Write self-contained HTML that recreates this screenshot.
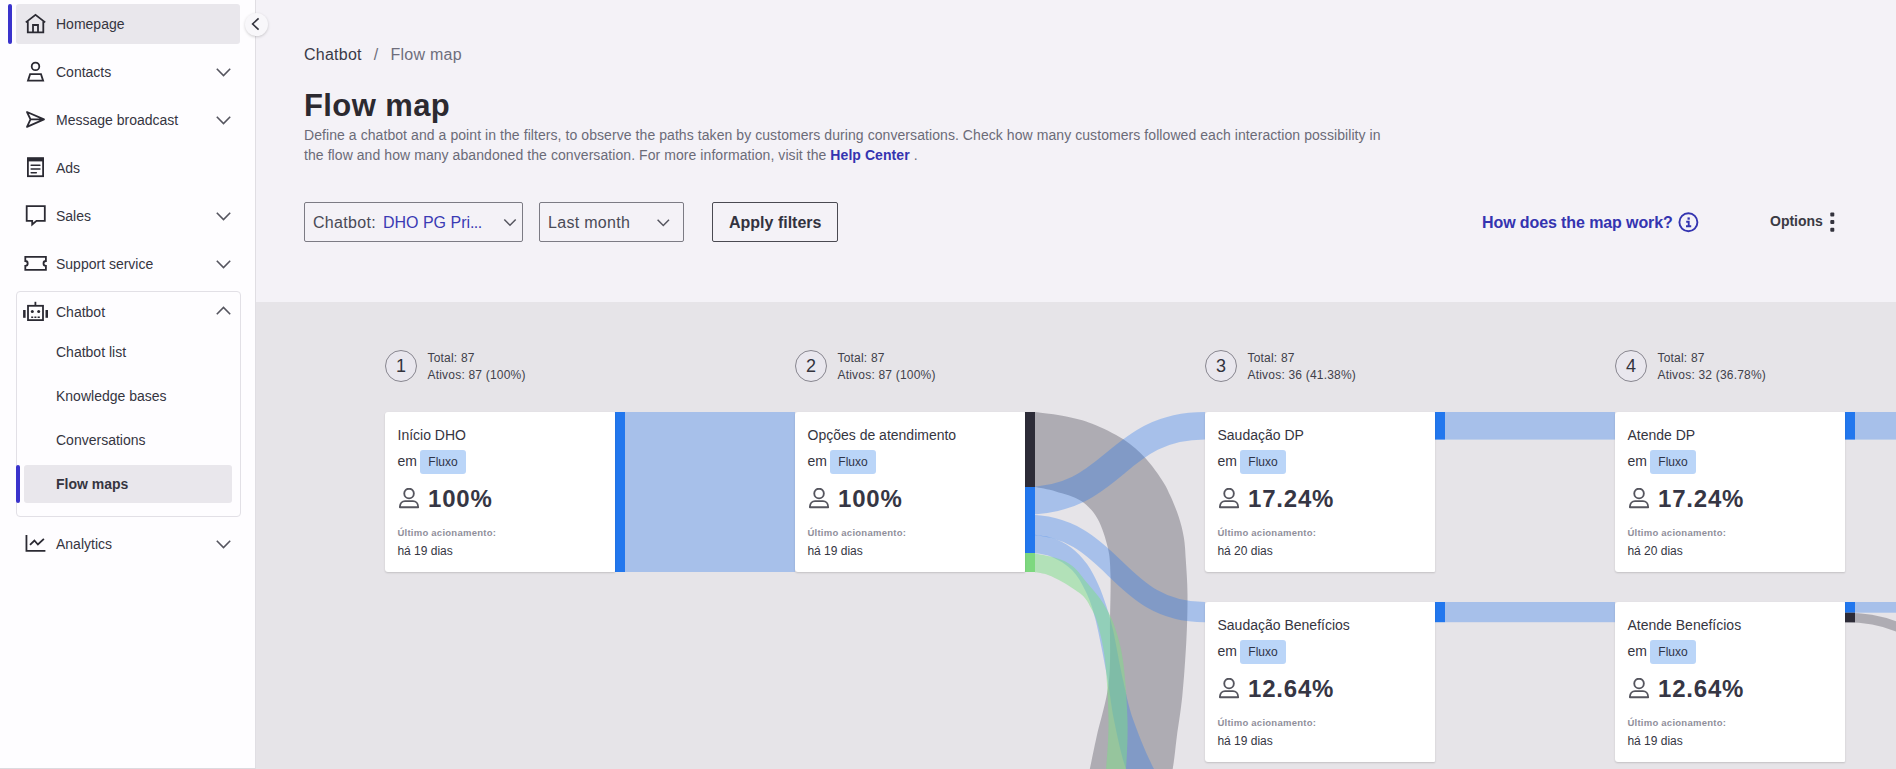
<!DOCTYPE html>
<html><head><meta charset="utf-8">
<style>
*{margin:0;padding:0;box-sizing:border-box}
html,body{width:1896px;height:769px;overflow:hidden;font-family:"Liberation Sans",sans-serif;background:#f4f2f7;color:#33333f}
.abs{position:absolute}
#side{position:absolute;left:0;top:0;width:256px;height:769px;background:#fefdff;border-right:1px solid #e0dee3;border-bottom:1px solid #dcdadf}
.item{position:absolute;left:16px;width:224px;height:40px}
.item .lbl{position:absolute;left:40px;top:0;line-height:40px;font-size:14px;color:#35353f;white-space:nowrap}
.item svg.ic{position:absolute;left:7px;top:10px}
.chev{position:absolute;right:8px;top:13px}
#main{position:absolute;left:256px;top:0;width:1640px;height:769px}
#flow{position:absolute;left:256px;top:302px;width:1640px;height:467px;background:#e6e4e8;overflow:hidden}
.card{position:absolute;width:230px;height:160px;background:#fff;border-radius:3px 1px 1px 3px;box-shadow:0 1px 2px rgba(0,0,0,0.16)}
.card .ct{position:absolute;left:12.5px;top:15px;font-size:14px;line-height:16px;color:#35353f;white-space:nowrap}
.card .em{position:absolute;left:12.5px;top:41px;font-size:14px;line-height:16px;color:#35353f}
.card .chip{position:absolute;left:35px;top:38px;width:46px;height:24px;border-radius:3px;background:#bad5f8;font-size:12px;line-height:25.5px;text-align:center;color:#2f3448}
.card .pi{position:absolute;left:14px;top:76px}
.card .pct{position:absolute;left:43px;top:74.5px;font-size:24px;line-height:24px;font-weight:bold;letter-spacing:0.8px;color:#363644;white-space:nowrap}
.card .ul{position:absolute;left:12.4px;top:115px;font-size:9.5px;line-height:12px;font-weight:bold;letter-spacing:0.25px;color:#908f9b;white-space:nowrap}
.card .when{position:absolute;left:12.4px;top:132px;font-size:12px;line-height:14px;color:#35353f;white-space:nowrap}
.stc{position:absolute;width:32px;height:32px;border-radius:50%;border:1px solid #88868f;background:#e9e7ee;font-size:18px;line-height:30px;text-align:center;color:#33333d}
.stt{position:absolute;font-size:12px;line-height:17px;letter-spacing:0.2px;color:#40404a;white-space:nowrap}
</style></head><body>
<div id="side">
  <div class="item" style="top:4px;background:#e9e7ec;border-radius:3px">
    <div class="lbl">Homepage</div>
  </div>
  <div class="abs" style="left:8px;top:4px;width:4px;height:40px;background:#3a33cc;border-radius:2px"></div>
  <div class="item" style="top:52px"><div class="lbl">Contacts</div></div>
  <div class="item" style="top:100px"><div class="lbl">Message broadcast</div></div>
  <div class="item" style="top:148px"><div class="lbl">Ads</div></div>
  <div class="item" style="top:196px"><div class="lbl">Sales</div></div>
  <div class="item" style="top:244px"><div class="lbl">Support service</div></div>
  <div class="abs" style="left:16px;top:291px;width:225px;height:226px;border:1px solid #e2e0e6;border-radius:4px"></div>
  <div class="item" style="top:292px"><div class="lbl">Chatbot</div></div>
  <div class="item" style="top:332px"><div class="lbl">Chatbot list</div></div>
  <div class="item" style="top:376px"><div class="lbl">Knowledge bases</div></div>
  <div class="item" style="top:420px"><div class="lbl">Conversations</div></div>
  <div class="abs" style="left:24px;top:465px;width:208px;height:38px;background:#e9e7ec;border-radius:3px"></div>
  <div class="abs" style="left:16px;top:465px;width:4px;height:38px;background:#3a33cc;border-radius:2px"></div>
  <div class="item" style="top:464px"><div class="lbl" style="font-weight:bold">Flow maps</div></div>
  <div class="item" style="top:524px"><div class="lbl">Analytics</div></div>
</div>
<svg class="abs" style="left:0;top:0" width="256" height="769" viewBox="0 0 256 769" fill="none" stroke="#2b2a33" stroke-width="1.8" stroke-linejoin="miter">
 <!-- house -->
 <path d="M25.8,22.4 L35.5,14.9 L45.2,22.4 M27.8,20.8 V32.3 H43.3 V20.8 M33,32.3 V25 H38 V32.3"/>
 <!-- contacts -->
 <circle cx="35.5" cy="66.4" r="3.8"/>
 <path d="M30.1,74.2 H41 L43.1,80.6 H28 Z"/>
 <!-- send -->
 <path d="M27,112 L44,119.4 L27,126.8 L30.5,119.4 Z M30.5,119.4 H44" stroke-linejoin="round"/>
 <!-- ads -->
 <rect x="27.9" y="158.4" width="15.2" height="17.8"/>
 <rect x="27.1" y="157.4" width="16.8" height="4" fill="#2b2a33" stroke="none"/>
 <path d="M31.2,165.2 H39.9 M31.2,169 H39.9 M31.2,172.8 H36.3" stroke-width="1.6" stroke-linecap="round"/>
 <!-- sales -->
 <path d="M26.7,206.1 H44.8 V220.9 H36.5 L32.2,224.5 V220.9 H26.7 Z"/>
 <!-- ticket -->
 <path d="M25.3,256.8 H45.9 V261 A2.4,2.4 0 0 0 45.9,265.8 V269.9 H25.3 V265.8 A2.4,2.4 0 0 0 25.3,261 Z"/>
 <!-- robot -->
 <rect x="28" y="305.8" width="15" height="14.3"/>
 <path d="M35.4,301.8 V305"/>
 <rect x="23.1" y="310" width="2.5" height="7.8" fill="#2b2a33" stroke="none"/>
 <rect x="45.5" y="310" width="2.5" height="7.8" fill="#2b2a33" stroke="none"/>
 <circle cx="32.3" cy="311.4" r="1.5" fill="#2b2a33" stroke="none"/>
 <circle cx="38.7" cy="311.4" r="1.5" fill="#2b2a33" stroke="none"/>
 <path d="M31.2,317.2 H33.2 M34.4,317.2 H36.4 M37.6,317.2 H39.8" stroke-width="1.5"/>
 <!-- analytics -->
 <path d="M26.45,535.1 V550.9 H45.4" />
 <path d="M30,544.9 L34.4,540.5 L37.9,544.5 L43.9,538.9" stroke-linejoin="miter"/>
 <!-- chevrons -->
 <g stroke="#55555f" stroke-width="1.6">
  <path d="M216.8,68.8 L223.5,75.5 L230.2,68.8"/>
  <path d="M216.8,116.8 L223.5,123.5 L230.2,116.8"/>
  <path d="M216.8,212.8 L223.5,219.5 L230.2,212.8"/>
  <path d="M216.8,260.8 L223.5,267.5 L230.2,260.8"/>
  <path d="M216.8,314.2 L223.5,307.5 L230.2,314.2"/>
  <path d="M216.8,540.8 L223.5,547.5 L230.2,540.8"/>
 </g>
</svg>
<div class="abs" style="left:245px;top:13px;width:23px;height:23px;border-radius:50%;background:#f8f7fa;box-shadow:0 1px 3px rgba(0,0,0,0.18)"></div>
<svg class="abs" style="left:245px;top:13px" width="23" height="23" viewBox="245 13 23 23" fill="none" stroke="#33333d" stroke-width="1.6"><path d="M258.6,18.3 L252.6,24 L258.6,29.6"/></svg>
<div id="main">
 <div class="abs" style="left:48px;top:44.5px;font-size:16px;line-height:20px;letter-spacing:0.25px;white-space:nowrap"><span style="color:#3a3a48">Chatbot</span><span style="color:#6e6e7c;margin-left:12px">/</span><span style="color:#6e6e7c;margin-left:12px">Flow map</span></div>
 <div class="abs" style="left:48px;top:88.8px;font-size:31px;line-height:34px;font-weight:bold;letter-spacing:0.4px;color:#2c2a30;white-space:nowrap">Flow map</div>
 <div class="abs" style="left:48px;top:125px;width:1200px;font-size:14px;line-height:20px;letter-spacing:0.07px;color:#6b6b78">Define a chatbot and a point in the filters, to observe the paths taken by customers during conversations. Check how many customers followed each interaction possibility in<br>the flow and how many abandoned the conversation. For more information, visit the <b style="color:#3434b0">Help Center</b> .</div>
 <div class="abs" style="left:48px;top:202px;width:219px;height:40px;border:1px solid #7c7b84;border-radius:2px"></div>
 <div class="abs" style="left:57px;top:212.5px;font-size:16px;line-height:20px;white-space:nowrap"><span style="color:#4a4a56;letter-spacing:0.3px">Chatbot:</span><span style="color:#3a3ab4;margin-left:7px">DHO PG Pri<span style="letter-spacing:-0.6px">...</span></span></div>
 <div class="abs" style="left:283px;top:202px;width:145px;height:40px;border:1px solid #7c7b84;border-radius:2px"></div>
 <div class="abs" style="left:292px;top:212.5px;font-size:16px;line-height:20px;letter-spacing:0.3px;color:#4a4a56;white-space:nowrap">Last month</div>
 <div class="abs" style="left:456px;top:202px;width:126px;height:40px;border:1px solid #4a4a52;border-radius:2px"></div>
 <div class="abs" style="left:473px;top:212.5px;font-size:16px;line-height:20px;color:#33333f;font-weight:bold;white-space:nowrap">Apply filters</div>
 <div class="abs" style="left:1226px;top:212.5px;letter-spacing:-0.1px;font-size:16px;line-height:20px;color:#3434b0;font-weight:bold;white-space:nowrap">How does the map work?</div>
 <div class="abs" style="left:1514px;top:212px;font-size:14px;line-height:18px;color:#3a3a44;font-weight:bold;white-space:nowrap">Options</div>
 <svg class="abs" style="left:0;top:0" width="1640" height="300" viewBox="256 0 1640 300" fill="none">
  <path d="M504.3,219.5 L510,225.2 L515.7,219.5" stroke="#55555f" stroke-width="1.5"/>
  <path d="M657.6,219.8 L663.3,225.5 L669,219.8" stroke="#55555f" stroke-width="1.5"/>
  <circle cx="1688.4" cy="222.3" r="9" stroke="#3434b0" stroke-width="1.9"/>
  <rect x="1687.5" y="217.4" width="2.3" height="2.3" fill="#3434b0"/>
  <path d="M1686.2,221.8 H1688.7 V226.3 M1686,226.3 H1691.2" stroke="#3434b0" stroke-width="1.9"/>
  <rect x="1830.3" y="212.4" width="4" height="4" rx="1" fill="#33333d"/>
  <rect x="1830.3" y="220" width="4" height="4" rx="1" fill="#33333d"/>
  <rect x="1830.3" y="227.7" width="4" height="4" rx="1" fill="#33333d"/>
 </svg>

</div>
<div id="flow">
<svg class="abs" style="left:0;top:0" width="1640" height="467" viewBox="256 302 1640 467"><path d="M1035,412 C1040.2,412.7 1056.7,414.4 1066.2,416.4 C1075.7,418.3 1082.7,419.9 1092.2,423.7 C1101.7,427.5 1114.6,433.6 1123.4,439.3 C1132.2,445.0 1138.9,451.3 1145.3,458.1 C1151.7,464.9 1157.8,473.8 1161.9,480.0 C1166.1,486.2 1167.4,489.5 1170.2,495.6 C1173.0,501.7 1176.3,509.5 1178.6,516.4 C1180.9,523.3 1182.6,529.9 1183.8,537.2 C1185.0,544.5 1185.2,550.4 1185.8,560.0 C1186.4,569.6 1187.4,581.4 1187.5,595.0 C1187.6,608.6 1187.2,624.8 1186.3,641.6 C1185.4,658.4 1183.9,680.1 1182.3,696.0 C1180.7,711.9 1178.4,724.5 1176.8,736.7 C1175.2,748.9 1175.2,753.5 1172.7,769.0 C1170.2,784.5 1163.8,819.8 1162.0,830.0 L1076,830 C1078.3,819.8 1086.4,784.5 1089.8,769.0 C1093.2,753.5 1093.4,751.2 1096.6,736.7 C1099.8,722.2 1106.6,701.8 1108.8,682.3 C1111.0,662.8 1109.7,637.9 1110.0,620.0 C1110.3,602.1 1110.9,587.1 1110.5,575.0 C1110.1,562.9 1110.0,557.0 1107.8,547.6 C1105.6,538.2 1101.9,526.3 1097.4,518.5 C1092.9,510.7 1087.7,505.3 1080.8,500.8 C1073.9,496.3 1063.4,493.7 1055.8,491.4 C1048.2,489.1 1038.5,487.7 1035.0,487.0 Z" fill="rgba(45,44,56,0.30)"/>
<path d="M1025,500.8 C1115.0,500.8 1115.0,425.8 1205,425.8" stroke="rgba(34,119,238,0.32)" stroke-width="27.6" fill="none"/>
<path d="M1025,524.7 C1115.0,524.7 1115.0,612.1 1205,612.1" stroke="rgba(34,119,238,0.32)" stroke-width="20.2" fill="none"/>
<path d="M1845,617.5 C1935.0,617.5 1935.0,680.0 2025,680.0" stroke="rgba(45,44,56,0.30)" stroke-width="9.6" fill="none"/>
<path d="M1035,534.8 C1038.0,535.4 1047.0,536.1 1053.0,538.2 C1059.0,540.3 1065.3,543.2 1071.0,547.5 C1076.7,551.8 1082.5,557.9 1087.0,564.0 C1091.5,570.1 1094.8,577.2 1098.0,584.0 C1101.2,590.8 1103.5,597.3 1106.0,605.0 C1108.5,612.7 1110.2,617.5 1113.0,630.0 C1115.8,642.5 1119.6,665.0 1123.0,680.0 C1126.4,695.0 1128.1,705.2 1133.3,720.0 C1138.5,734.8 1147.0,755.7 1154.0,769.0 C1161.0,782.3 1171.5,794.8 1175.0,800.0 L1142,800 C1139.3,794.8 1130.7,782.3 1126.0,769.0 C1121.3,755.7 1117.2,735.7 1114.0,720.0 C1110.8,704.3 1109.8,691.3 1106.7,674.6 C1103.6,657.9 1099.0,633.8 1095.6,620.0 C1092.1,606.2 1089.9,600.3 1086.0,592.0 C1082.1,583.7 1077.7,575.8 1072.0,570.0 C1066.3,564.2 1058.2,559.8 1052.0,557.0 C1045.8,554.2 1037.8,553.7 1035.0,553.0 Z" fill="rgba(34,119,238,0.32)"/>
<path d="M1035,553.4 C1038.5,554.2 1049.7,555.8 1056.0,558.0 C1062.3,560.2 1067.5,562.0 1072.9,566.4 C1078.3,570.8 1083.5,578.5 1088.5,584.6 C1093.5,590.7 1098.8,596.3 1103.0,603.0 C1107.2,609.7 1110.7,615.5 1114.0,625.0 C1117.3,634.5 1120.7,644.2 1122.9,660.0 C1125.2,675.8 1127.0,701.8 1127.5,720.0 C1128.0,738.2 1126.9,755.7 1126.0,769.0 C1125.1,782.3 1122.7,794.8 1122.0,800.0 L1102,800 C1102.7,794.8 1104.9,782.3 1106.0,769.0 C1107.1,755.7 1108.7,738.2 1108.5,720.0 C1108.3,701.8 1106.8,675.8 1105.0,660.0 C1103.2,644.2 1100.3,633.7 1098.0,625.0 C1095.7,616.3 1093.7,613.0 1091.0,608.0 C1088.3,603.0 1086.8,599.3 1082.0,595.0 C1077.2,590.7 1068.2,585.4 1062.5,582.0 C1056.8,578.6 1052.6,576.5 1048.0,574.9 C1043.4,573.3 1037.2,572.7 1035.0,572.3 Z" fill="rgba(125,222,135,0.5)"/>
<rect x="625" y="412" width="170" height="160" fill="rgba(34,119,238,0.32)"/>
<rect x="1445" y="412" width="170" height="27.6" fill="rgba(34,119,238,0.32)"/>
<rect x="1445" y="602" width="170" height="20.2" fill="rgba(34,119,238,0.32)"/>
<rect x="1855" y="412" width="41" height="27.6" fill="rgba(34,119,238,0.32)"/>
<rect x="1855" y="602" width="41" height="10.7" fill="rgba(34,119,238,0.32)"/>
<rect x="615" y="412" width="10" height="160" fill="#2277ee"/>
<rect x="1025" y="412" width="10" height="75" fill="#2d2c38"/>
<rect x="1025" y="487" width="10" height="66" fill="#2277ee"/>
<rect x="1025" y="553" width="10" height="19" fill="#7dd87f"/>
<rect x="1435" y="412" width="10" height="27.6" fill="#2277ee"/>
<rect x="1435" y="602" width="10" height="20.2" fill="#2277ee"/>
<rect x="1845" y="412" width="10" height="27.6" fill="#2277ee"/>
<rect x="1845" y="602" width="10" height="10.7" fill="#2277ee"/>
<rect x="1845" y="612.7" width="10" height="9.6" fill="#2d2c38"/></svg>
<div class="card" style="left:129px;top:110px">
 <div class="ct">Início DHO</div>
 <div class="em">em</div><div class="chip">Fluxo</div>
 <svg class="pi" width="22" height="22" viewBox="0 0 22 22" fill="none" stroke="#55555e" stroke-width="1.85"><circle cx="10.05" cy="5.5" r="4.8"/><path d="M0.9,19.2 C0.9,15 3.5,13.1 6,13.1 H14 C16.5,13.1 19.2,15 19.2,19.2 Z" stroke-linejoin="round"/></svg>
 <div class="pct">100%</div>
 <div class="ul">Último acionamento:</div>
 <div class="when">há 19 dias</div>
</div>
<div class="card" style="left:539px;top:110px">
 <div class="ct">Opções de atendimento</div>
 <div class="em">em</div><div class="chip">Fluxo</div>
 <svg class="pi" width="22" height="22" viewBox="0 0 22 22" fill="none" stroke="#55555e" stroke-width="1.85"><circle cx="10.05" cy="5.5" r="4.8"/><path d="M0.9,19.2 C0.9,15 3.5,13.1 6,13.1 H14 C16.5,13.1 19.2,15 19.2,19.2 Z" stroke-linejoin="round"/></svg>
 <div class="pct">100%</div>
 <div class="ul">Último acionamento:</div>
 <div class="when">há 19 dias</div>
</div>
<div class="card" style="left:949px;top:110px">
 <div class="ct">Saudação DP</div>
 <div class="em">em</div><div class="chip">Fluxo</div>
 <svg class="pi" width="22" height="22" viewBox="0 0 22 22" fill="none" stroke="#55555e" stroke-width="1.85"><circle cx="10.05" cy="5.5" r="4.8"/><path d="M0.9,19.2 C0.9,15 3.5,13.1 6,13.1 H14 C16.5,13.1 19.2,15 19.2,19.2 Z" stroke-linejoin="round"/></svg>
 <div class="pct">17.24%</div>
 <div class="ul">Último acionamento:</div>
 <div class="when">há 20 dias</div>
</div>
<div class="card" style="left:1359px;top:110px">
 <div class="ct">Atende DP</div>
 <div class="em">em</div><div class="chip">Fluxo</div>
 <svg class="pi" width="22" height="22" viewBox="0 0 22 22" fill="none" stroke="#55555e" stroke-width="1.85"><circle cx="10.05" cy="5.5" r="4.8"/><path d="M0.9,19.2 C0.9,15 3.5,13.1 6,13.1 H14 C16.5,13.1 19.2,15 19.2,19.2 Z" stroke-linejoin="round"/></svg>
 <div class="pct">17.24%</div>
 <div class="ul">Último acionamento:</div>
 <div class="when">há 20 dias</div>
</div>
<div class="card" style="left:949px;top:300px">
 <div class="ct">Saudação Benefícios</div>
 <div class="em">em</div><div class="chip">Fluxo</div>
 <svg class="pi" width="22" height="22" viewBox="0 0 22 22" fill="none" stroke="#55555e" stroke-width="1.85"><circle cx="10.05" cy="5.5" r="4.8"/><path d="M0.9,19.2 C0.9,15 3.5,13.1 6,13.1 H14 C16.5,13.1 19.2,15 19.2,19.2 Z" stroke-linejoin="round"/></svg>
 <div class="pct">12.64%</div>
 <div class="ul">Último acionamento:</div>
 <div class="when">há 19 dias</div>
</div>
<div class="card" style="left:1359px;top:300px">
 <div class="ct">Atende Benefícios</div>
 <div class="em">em</div><div class="chip">Fluxo</div>
 <svg class="pi" width="22" height="22" viewBox="0 0 22 22" fill="none" stroke="#55555e" stroke-width="1.85"><circle cx="10.05" cy="5.5" r="4.8"/><path d="M0.9,19.2 C0.9,15 3.5,13.1 6,13.1 H14 C16.5,13.1 19.2,15 19.2,19.2 Z" stroke-linejoin="round"/></svg>
 <div class="pct">12.64%</div>
 <div class="ul">Último acionamento:</div>
 <div class="when">há 19 dias</div>
</div>
<div class="stc" style="left:129px;top:48px">1</div><div class="stt" style="left:171.5px;top:47.69999999999999px">Total: 87<br>Ativos: 87 (100%)</div>
<div class="stc" style="left:539px;top:48px">2</div><div class="stt" style="left:581.5px;top:47.69999999999999px">Total: 87<br>Ativos: 87 (100%)</div>
<div class="stc" style="left:949px;top:48px">3</div><div class="stt" style="left:991.5px;top:47.69999999999999px">Total: 87<br>Ativos: 36 (41.38%)</div>
<div class="stc" style="left:1359px;top:48px">4</div><div class="stt" style="left:1401.5px;top:47.69999999999999px">Total: 87<br>Ativos: 32 (36.78%)</div>
</div><!--flowend-->
</body></html>
